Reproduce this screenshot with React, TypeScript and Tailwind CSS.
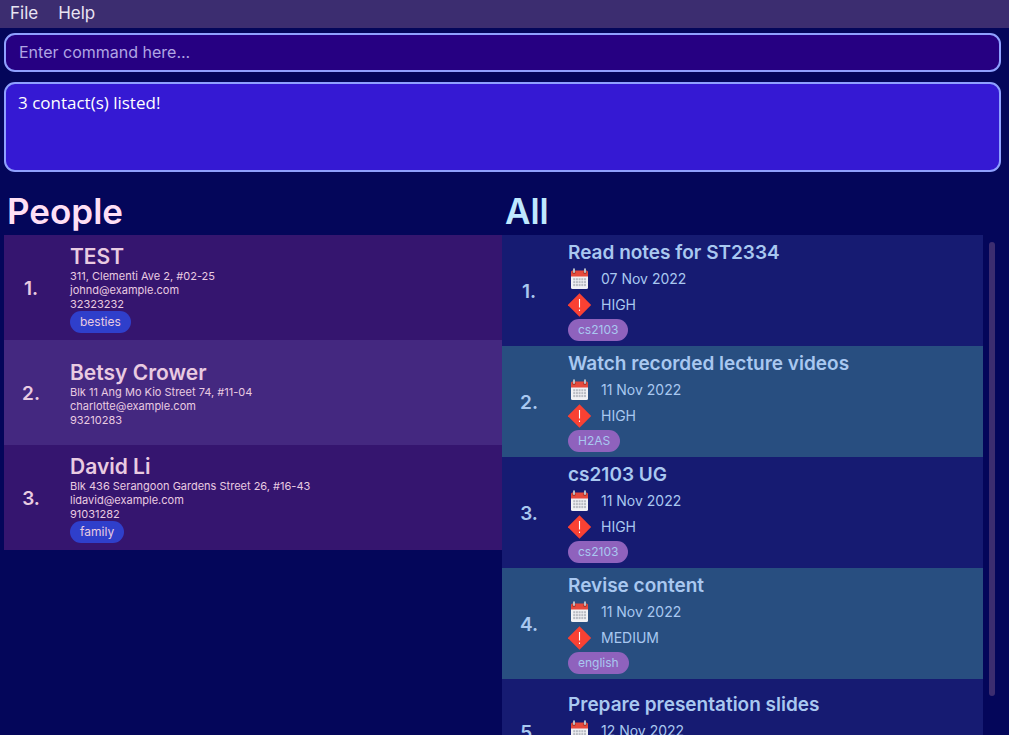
import type { ReactNode } from "react";

type Person = { name: string; address: string; email: string; phone: string; tags: string[] };
type Task = { title: string; date: string; priority: string; tags: string[] };

const people: Person[] = [
  { name: "TEST", address: "311, Clementi Ave 2, #02-25", email: "johnd@example.com", phone: "32323232", tags: ["besties"] },
  { name: "Betsy Crower", address: "Blk 11 Ang Mo Kio Street 74, #11-04", email: "charlotte@example.com", phone: "93210283", tags: [] },
  { name: "David Li", address: "Blk 436 Serangoon Gardens Street 26, #16-43", email: "lidavid@example.com", phone: "91031282", tags: ["family"] },
];

const tasks: Task[] = [
  { title: "Read notes for ST2334", date: "07 Nov 2022", priority: "HIGH", tags: ["cs2103"] },
  { title: "Watch recorded lecture videos", date: "11 Nov 2022", priority: "HIGH", tags: ["H2AS"] },
  { title: "cs2103 UG", date: "11 Nov 2022", priority: "HIGH", tags: ["cs2103"] },
  { title: "Revise content", date: "11 Nov 2022", priority: "MEDIUM", tags: ["english"] },
  { title: "Prepare presentation slides", date: "12 Nov 2022", priority: "HIGH", tags: [] },
];

function CalendarIcon() {
  const columns = [2.2, 4.9, 7.6, 10.3, 13];
  const rows = [10.2, 13.1, 16];
  return (
    <svg width="17" height="22" viewBox="0 0 17 22" aria-hidden="true">
      <path d="M0 6h17v13.5a1.5 1.5 0 0 1-1.5 1.5h-14A1.5 1.5 0 0 1 0 19.5z" fill="#f1f1f4" />
      <path d="M0 4a1.5 1.5 0 0 1 1.5-1.5h14A1.5 1.5 0 0 1 17 4v4.5H0z" fill="#e64a3c" />
      {[3, 14].map((x) => (
        <g key={x}>
          <circle cx={x} cy="4.4" r="1.7" fill="#a8352d" />
          <rect x={x - 1} y="0.3" width="2" height="4.8" rx="1" fill="#b9c0c8" />
        </g>
      ))}
      {rows.map((y) =>
        columns.map((x) => <rect key={`${x}-${y}`} x={x} y={y} width="2" height="2.1" fill="#b9bcc4" />),
      )}
    </svg>
  );
}

function PriorityIcon() {
  return (
    <svg width="24" height="24" viewBox="0 0 24 24" aria-hidden="true">
      <path d="M11.5 0.3 23.2 12 11.5 23.7-.2 12z" fill="#f94133" />
      <path d="M11.5 6v8.5M11.5 16.5v1.5" stroke="#fff" strokeWidth="1.1" />
    </svg>
  );
}

function Row({ index, className, children }: { index: number; className: string; children: ReactNode }) {
  return (
    <li className={`flex min-h-[105px] shrink-0 items-center ${className}`}>
      <span className="mr-3 w-[54px] shrink-0 pt-1 text-center text-[19px] font-semibold">{index}.</span>
      <div className="min-w-0 flex-1">{children}</div>
    </li>
  );
}

function Tags({ tags, className }: { tags: string[]; className: string }) {
  if (tags.length === 0) return null;
  return (
    <div className="flex gap-1">
      {tags.map((tag) => (
        <span key={tag} className={`rounded-full px-2.5 text-xs leading-[22px] ${className}`}>
          {tag}
        </span>
      ))}
    </div>
  );
}

export default function App() {
  return (
    <div className="flex h-screen flex-col overflow-hidden bg-[#04065a] font-['Inter',sans-serif]">
      <nav className="flex h-7 shrink-0 items-center gap-5 bg-[#3c2d70] px-2.5 text-[17px] text-[#e9e4f2]">
        <button type="button">File</button>
        <button type="button">Help</button>
      </nav>

      <div className="flex shrink-0 flex-col gap-2.5 pt-[5px] pr-2 pl-1">
        <input
          aria-label="Command"
          placeholder="Enter command here..."
          className="h-[39px] w-full rounded-[11px] border-2 border-[#8fa0ff] bg-[#260082] px-[13px] pb-0.5 text-base text-white outline-none placeholder:text-[#b0a5e4]"
        />
        <textarea
          aria-label="Result"
          readOnly
          value="3 contact(s) listed!"
          className="h-[90px] w-full resize-none rounded-[11px] border-2 border-[#8fa0ff] bg-[#3519d3] px-3 py-[7px] font-['Open_Sans',sans-serif] text-[17px] leading-6 text-white outline-none"
        />
      </div>

      <main className="flex min-h-0 flex-1 pt-[15px] pr-[9px] pl-1">
        <section className="flex min-h-0 flex-1 flex-col">
          <h1 className="pl-[3px] text-[35px] leading-[48px] font-semibold text-[#ffdff5]">People</h1>
          <ol className="min-h-0 flex-1 overflow-hidden text-[#e9cbe1]">
            {people.map((person, i) => (
              <Row key={person.name} index={i + 1} className="bg-[#35156f] even:bg-[#442880]">
                <h2 className="pt-0.5 text-[21px] leading-[25px] font-semibold">{person.name}</h2>
                <p className="text-[11px] leading-[14px]">{person.address}</p>
                <p className="text-[11px] leading-[14px]">{person.email}</p>
                <p className="text-[11px] leading-[14px]">{person.phone}</p>
                <Tags tags={person.tags} className="bg-[#2f3fcb]" />
              </Row>
            ))}
          </ol>
        </section>

        <section className="flex min-h-0 flex-1 flex-col">
          <h1 className="pl-[3px] text-[35px] leading-[48px] font-semibold text-[#bfe8ff]">All</h1>
          <div className="flex min-h-0 flex-1">
            <ol className="min-h-0 flex-1 overflow-hidden text-[#a9c8f0]">
              {tasks.map((task, i) => (
                <Row key={task.title} index={i + 1} className="bg-[#161b72] py-[5px] even:bg-[#284e80]">
                  <h2 className="text-[19px] leading-[26px] font-semibold">{task.title}</h2>
                  <p className="flex h-[26px] items-center text-sm">
                    <span className="flex w-[33px] pl-[3px]">
                      <CalendarIcon />
                    </span>
                    {task.date}
                  </p>
                  <p className="mb-px flex h-[26px] items-center text-sm">
                    <span className="flex w-[33px]">
                      <PriorityIcon />
                    </span>
                    {task.priority}
                  </p>
                  <Tags tags={task.tags} className="bg-[#8f62bd]" />
                </Row>
              ))}
            </ol>
            <div className="w-[17px] shrink-0 pt-[7px] pl-1.5">
              <div className="h-[92%] w-1.5 rounded-full bg-[#3c2d70]" />
            </div>
          </div>
        </section>
      </main>
    </div>
  );
}
